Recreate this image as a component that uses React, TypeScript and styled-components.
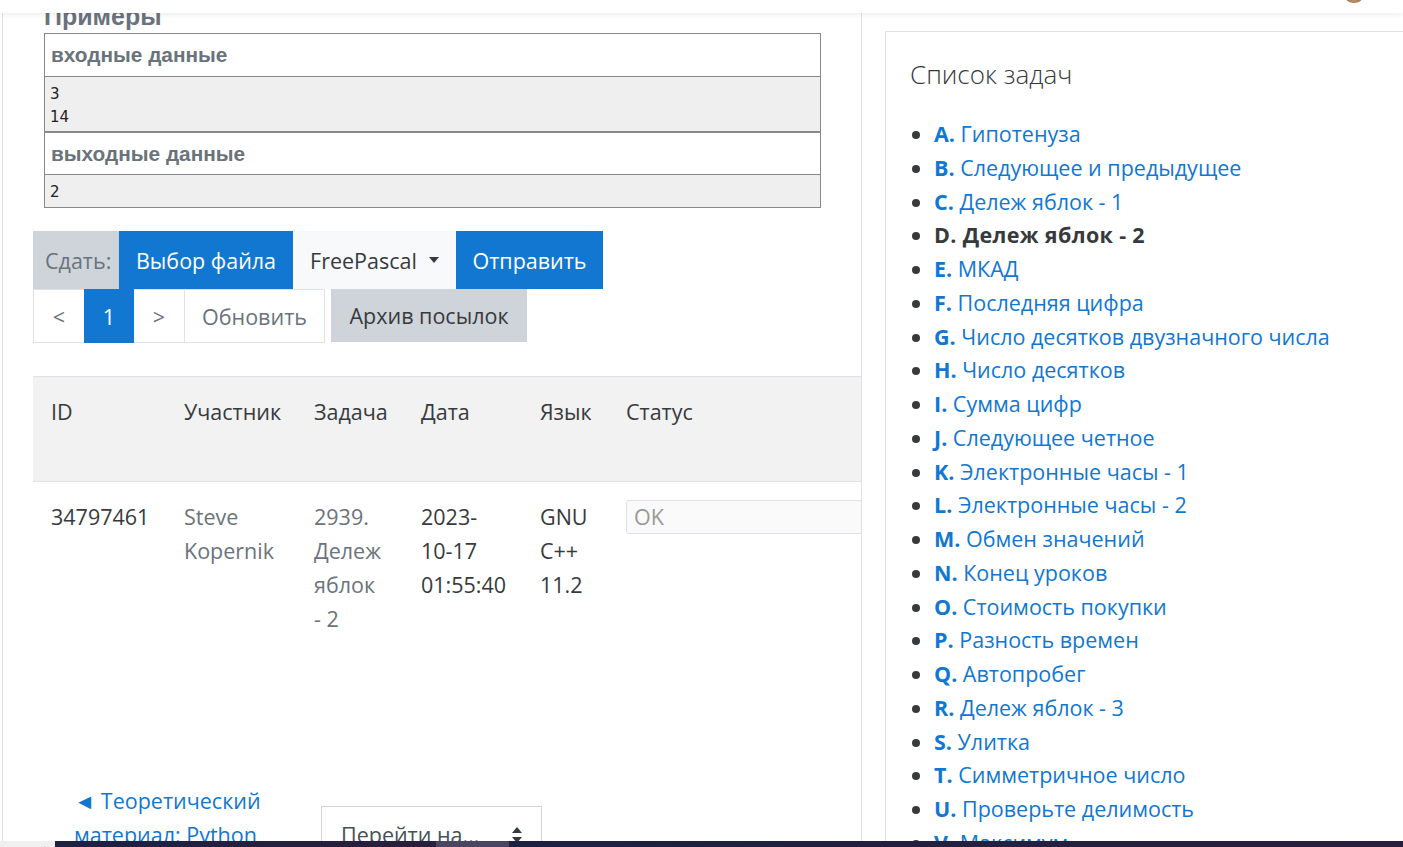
import React from 'react';
import styled, { createGlobalStyle } from 'styled-components';

const Global = createGlobalStyle`
  html, body { margin: 0; padding: 0; }
  body {
    font-family: "Open Sans", "Noto Sans", sans-serif;
    color: #373a3c;
    background: #fff;
    width: 1403px;
    height: 847px;
    overflow: hidden;
  }
  * { box-sizing: border-box; }
`;

const Navbar = styled.div`
  position: fixed;
  top: 0;
  left: 0;
  right: 0;
  height: 13px;
  background: #fff;
  box-shadow: 0 2px 5px rgba(0, 0, 0, 0.07);
  z-index: 10;
`;

const Avatar = styled.div`
  position: absolute;
  right: 38px;
  top: -19px;
  width: 22px;
  height: 22px;
  border-radius: 50%;
  background: radial-gradient(circle at 50% 80%, #c89a6a, #7a5234 70%);
`;

const Taskbar = styled.div`
  position: fixed;
  left: 0;
  right: 0;
  bottom: 0;
  height: 6px;
  display: flex;
  z-index: 11;
`;

const TrayStart = styled.div`
  width: 55px;
  background: #f0f0f0;
  display: flex;
  justify-content: flex-end;
  padding-right: 6px;
  font-size: 8px;
  line-height: 14px;
  color: #333;
  overflow: hidden;
`;

const TrayDark = styled.div<{ $w?: number; $light?: boolean }>`
  ${(p) => (p.$w ? `width: ${p.$w}px; flex: none;` : 'flex: 1;')}
  background: ${(p) => (p.$light ? '#4a4561' : 'linear-gradient(90deg, #1c2144, #2a1f3c)')};
`;

const Page = styled.div`
  display: flex;
  align-items: flex-start;
  gap: 23px;
  padding-left: 2px;
  height: 847px;
  overflow: hidden;
`;

const MainCard = styled.div`
  flex: none;
  width: 860px;
  height: 900px;
  border-left: 1px solid #dee2e6;
  border-right: 1px solid #dee2e6;
  padding-left: 30px;
  overflow: hidden;
`;

const ExamplesTitle = styled.h3`
  margin: 0 0 0 11px;
  height: 33px;
  font-family: "Liberation Sans", Arial, sans-serif;
  font-weight: bold;
  font-size: 25px;
  line-height: 32px;
  color: #6a737b;
`;

const Examples = styled.div`
  margin-left: 11px;
  width: 777px;
`;

const ExampleBlock = styled.div`
  border: 1px solid #888;
`;

const ExampleHead = styled.div<{ $h: number }>`
  height: ${(p) => p.$h}px;
  padding-left: 6px;
  display: flex;
  align-items: center;
  font-family: "Liberation Sans", Arial, sans-serif;
  font-weight: bold;
  font-size: 20.8px;
  color: #6a737b;
  background: #fff;
  border-bottom: 1px solid #888;
`;

const ExampleData = styled.pre<{ $h: number }>`
  margin: 0;
  height: ${(p) => p.$h}px;
  padding: 6px 5px 0;
  background: #efefef;
  font-family: "DejaVu Sans", sans-serif;
  font-size: 15px;
  line-height: 23px;
  color: #222;
`;

const SubmitBar = styled.div`
  margin-top: 23px;
  display: flex;
  height: 58px;
`;

const BarItem = styled.div<{ $w: number; $kind: 'label' | 'primary' | 'light' }>`
  width: ${(p) => p.$w}px;
  display: flex;
  align-items: center;
  justify-content: ${(p) => (p.$kind === 'label' ? 'flex-start' : 'center')};
  padding: 0 12px;
  gap: 12px;
  font-size: 21.5px;
  white-space: nowrap;
  background: ${(p) => (p.$kind === 'label' ? '#ced4da' : p.$kind === 'primary' ? '#1177d1' : '#f8f9fa')};
  color: ${(p) => (p.$kind === 'label' ? '#6a737b' : p.$kind === 'primary' ? '#fff' : '#373a3c')};
`;

const Caret = styled.span`
  width: 0;
  height: 0;
  border-left: 5.5px solid transparent;
  border-right: 5.5px solid transparent;
  border-top: 6px solid #373a3c;
`;

const PagerRow = styled.div`
  display: flex;
  align-items: flex-start;
`;

const PageItem = styled.div<{ $w: number; $active?: boolean }>`
  width: ${(p) => p.$w}px;
  height: 54px;
  margin-left: -1px;
  &:first-child { margin-left: 0; }
  display: flex;
  align-items: center;
  justify-content: center;
  font-size: 21.5px;
  border: 1px solid ${(p) => (p.$active ? '#1177d1' : '#dee2e6')};
  background: ${(p) => (p.$active ? '#1177d1' : '#fff')};
  color: ${(p) => (p.$active ? '#fff' : '#6a737b')};
  position: relative;
  z-index: ${(p) => (p.$active ? 1 : 0)};
`;

const ArchiveButton = styled.div`
  margin-left: 6px;
  width: 196px;
  height: 53px;
  display: flex;
  align-items: center;
  justify-content: center;
  background: #ced4da;
  color: #373a3c;
  font-size: 21.5px;
`;

const COLS = '133px 130px 107px 119px 86px 300px';

const Table = styled.div`
  margin-top: 33px;
  width: 875px;
  font-size: 21.5px;
  line-height: 34px;
`;

const HeadRow = styled.div`
  display: grid;
  grid-template-columns: ${COLS};
  height: 106px;
  background: #f2f2f2;
  border-top: 1px solid #dee2e6;
  border-bottom: 1px solid #dee2e6;
  color: #373a3c;
`;

const HeadCell = styled.div`
  padding: 18px 18px;
`;

const BodyRow = styled.div`
  display: grid;
  grid-template-columns: ${COLS};
`;

const Cell = styled.div<{ $muted?: boolean }>`
  padding: 18px 18px;
  color: ${(p) => (p.$muted ? '#6a737b' : '#373a3c')};
`;

const StatusBox = styled.div`
  width: 270px;
  height: 34px;
  border: 1px solid #dee2e6;
  border-radius: 3px;
  background: #fafafa;
  color: #999;
  padding-left: 7px;
  line-height: 32px;
`;

const BottomNav = styled.div`
  margin-top: 130px;
  margin-left: 41px;
  display: flex;
  align-items: flex-start;
  font-size: 21.5px;
  line-height: 34px;
`;

const PrevLink = styled.a`
  width: 200px;
  color: #1177d1;
  text-decoration: none;
`;

const JumpSelect = styled.div`
  margin-left: 47px;
  margin-top: 22px;
  width: 221px;
  height: 58px;
  border: 1px solid #ced4da;
  display: flex;
  align-items: center;
  justify-content: space-between;
  padding: 0 18px 0 19px;
  color: #495057;
`;

const SideCard = styled.div`
  flex: none;
  margin-top: 31px;
  width: 560px;
  height: 900px;
  border: 1px solid #dee2e6;
  padding: 24px;
`;

const SideTitle = styled.h5`
  margin: 0 0 24px;
  font-size: 26px;
  line-height: 37px;
  font-weight: 300;
  color: #373a3c;
`;

const TaskList = styled.ul`
  margin: 0;
  padding-left: 24px;
  font-size: 21.5px;
  line-height: 33.75px;
  color: #373a3c;
`;

const TaskItem = styled.li<{ $current?: boolean }>`
  white-space: nowrap;
  font-weight: ${(p) => (p.$current ? 700 : 400)};
  letter-spacing: ${(p) => (p.$current ? '0.35px' : 'normal')};
`;

const TaskLink = styled.a`
  color: #1177d1;
  text-decoration: none;
  & b { font-weight: 700; }
`;

const tasks: [string, string][] = [
  ['A', 'Гипотенуза'],
  ['B', 'Следующее и предыдущее'],
  ['C', 'Дележ яблок - 1'],
  ['D', 'Дележ яблок - 2'],
  ['E', 'МКАД'],
  ['F', 'Последняя цифра'],
  ['G', 'Число десятков двузначного числа'],
  ['H', 'Число десятков'],
  ['I', 'Сумма цифр'],
  ['J', 'Следующее четное'],
  ['K', 'Электронные часы - 1'],
  ['L', 'Электронные часы - 2'],
  ['M', 'Обмен значений'],
  ['N', 'Конец уроков'],
  ['O', 'Стоимость покупки'],
  ['P', 'Разность времен'],
  ['Q', 'Автопробег'],
  ['R', 'Дележ яблок - 3'],
  ['S', 'Улитка'],
  ['T', 'Симметричное число'],
  ['U', 'Проверьте делимость'],
  ['V', 'Максимум'],
];

const Arrows = () => (
  <svg width="12" height="18" viewBox="0 0 12 18">
    <path d="M6 1 L11 7 H1 Z" fill="#343a40" />
    <path d="M6 17 L11 11 H1 Z" fill="#343a40" />
  </svg>
);

export default function App() {
  return (
    <>
      <Global />
      <Navbar>
        <Avatar />
      </Navbar>
      <Page>
        <MainCard>
          <ExamplesTitle>Примеры</ExamplesTitle>
          <Examples>
            <ExampleBlock>
              <ExampleHead $h={43}>входные данные</ExampleHead>
              <ExampleData $h={54}>{'3\n14'}</ExampleData>
            </ExampleBlock>
            <ExampleBlock>
              <ExampleHead $h={42}>выходные данные</ExampleHead>
              <ExampleData $h={32}>2</ExampleData>
            </ExampleBlock>
          </Examples>

          <SubmitBar>
            <BarItem $w={86} $kind="label">Сдать:</BarItem>
            <BarItem $w={174} $kind="primary">Выбор файла</BarItem>
            <BarItem $w={163} $kind="light">
              FreePascal <Caret />
            </BarItem>
            <BarItem $w={147} $kind="primary">Отправить</BarItem>
          </SubmitBar>
          <PagerRow>
            <PageItem $w={52}>&lt;</PageItem>
            <PageItem $w={50} $active>1</PageItem>
            <PageItem $w={52}>&gt;</PageItem>
            <PageItem $w={141}>Обновить</PageItem>
            <ArchiveButton>Архив посылок</ArchiveButton>
          </PagerRow>

          <Table>
            <HeadRow>
              <HeadCell>ID</HeadCell>
              <HeadCell>Участник</HeadCell>
              <HeadCell>Задача</HeadCell>
              <HeadCell>Дата</HeadCell>
              <HeadCell>Язык</HeadCell>
              <HeadCell>Статус</HeadCell>
            </HeadRow>
            <BodyRow>
              <Cell>34797461</Cell>
              <Cell $muted>Steve Kopernik</Cell>
              <Cell $muted>2939. Дележ яблок - 2</Cell>
              <Cell>2023-10-17 01:55:40</Cell>
              <Cell>GNU C++ 11.2</Cell>
              <Cell>
                <StatusBox>OK</StatusBox>
              </Cell>
            </BodyRow>
          </Table>

          <BottomNav>
            <PrevLink href="#">◄ Теоретический материал: Python</PrevLink>
            <JumpSelect>
              Перейти на...
              <Arrows />
            </JumpSelect>
          </BottomNav>
        </MainCard>

        <SideCard>
          <SideTitle>Список задач</SideTitle>
          <TaskList>
            {tasks.map(([l, t]) =>
              l === 'D' ? (
                <TaskItem key={l} $current>
                  {l}. {t}
                </TaskItem>
              ) : (
                <TaskItem key={l}>
                  <TaskLink href="#">
                    <b>{l}.</b> {t}
                  </TaskLink>
                </TaskItem>
              )
            )}
          </TaskList>
        </SideCard>
      </Page>
      <Taskbar>
        <TrayStart>▲</TrayStart>
        <TrayDark $w={381} />
        <TrayDark $w={73} $light />
        <TrayDark />
      </Taskbar>
    </>
  );
}
